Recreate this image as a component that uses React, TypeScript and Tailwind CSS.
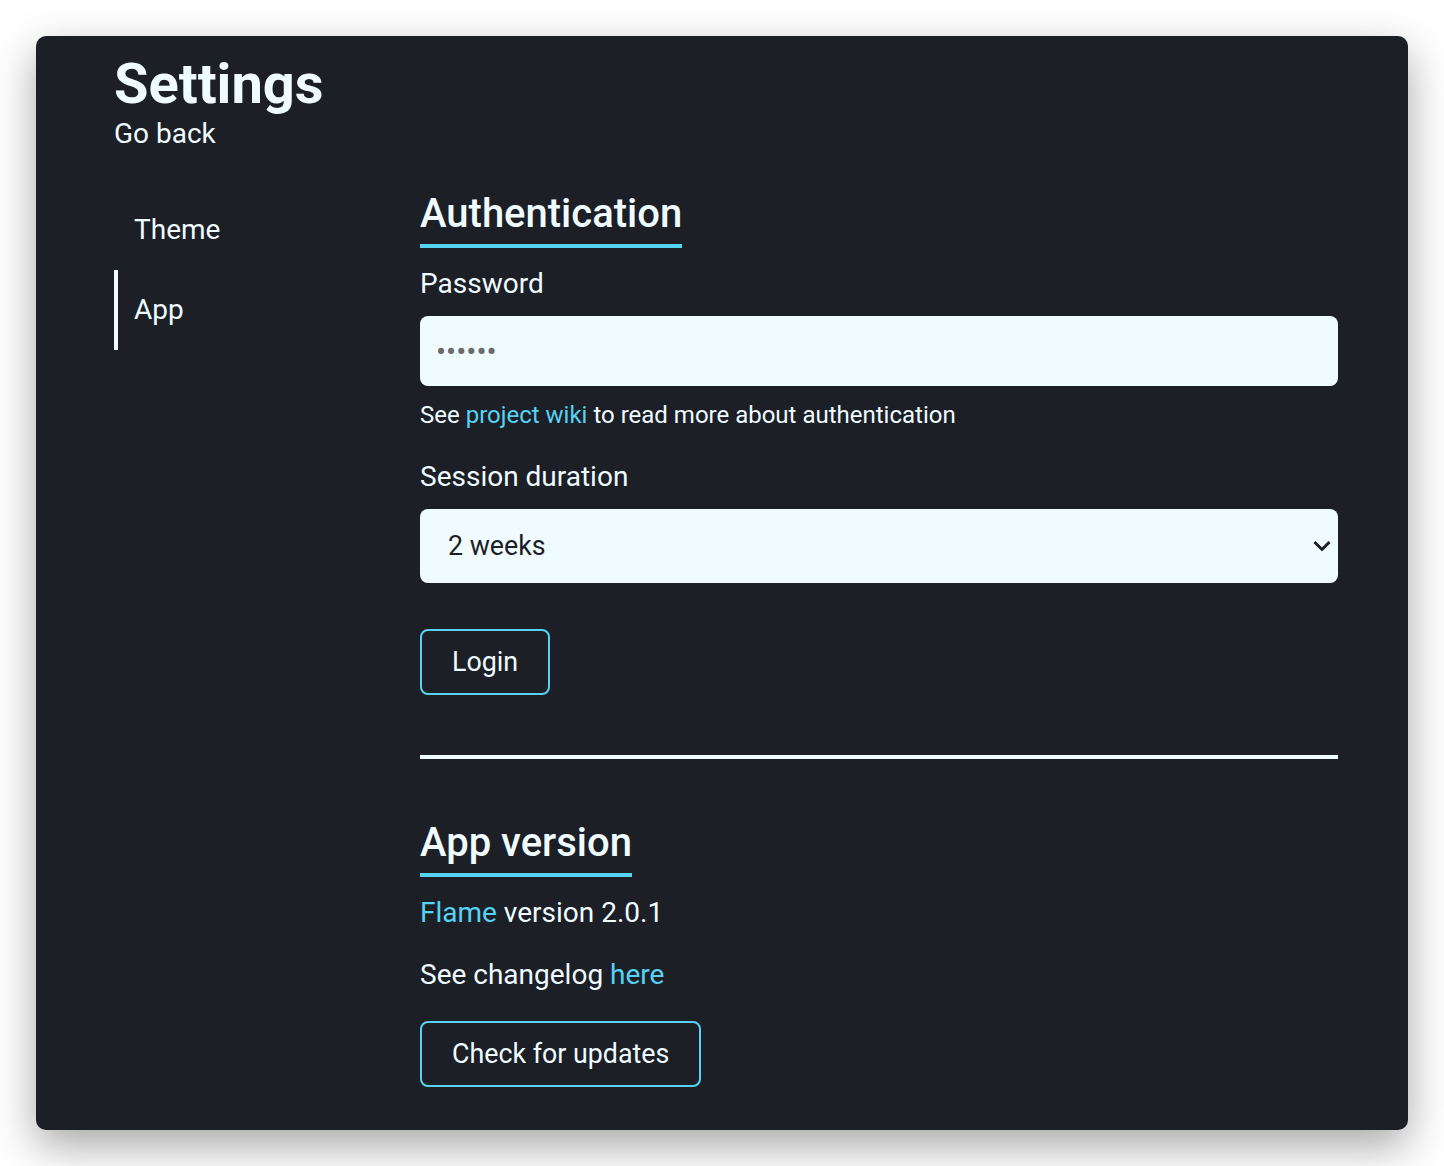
import React from 'react';

const accent = 'text-[#56d3f2]';

export default function App() {
  return (
    <div className="min-h-screen bg-white p-[36px] font-['Roboto','Liberation_Sans',sans-serif]">
      <div className="h-[1094px] w-[1372px] rounded-[10px] bg-[#1c1f26] pl-[78px] pt-[20px] text-[#effbff] shadow-[0_16px_44px_rgba(0,0,0,0.35)]">
        <header>
          <h1 className="text-[56px] font-bold leading-[56px]">Settings</h1>
          <a className="mt-[8px] block w-fit cursor-pointer text-[28px] leading-[28px]">Go back</a>
        </header>

        <div className="mt-[42px] grid grid-cols-[306px_918px]">
          <nav className="flex flex-col">
            <a className="flex h-[80px] cursor-pointer items-center border-l-4 border-transparent pl-4 text-[28px] leading-[28px]">
              Theme
            </a>
            <a className="flex h-[80px] cursor-pointer items-center border-l-4 border-[#effbff] pl-4 text-[28px] leading-[28px]">
              App
            </a>
          </nav>

          <main>
            <h2 className="w-fit border-b-4 border-[#56d3f2] pb-[6px] text-[40px] font-medium leading-[48px]">
              Authentication
            </h2>
            <label className="mt-[22px] block text-[28px] leading-[28px]">Password</label>
            <input
              type="password"
              placeholder="••••••"
              className="mt-[18px] block h-[70px] w-full rounded-[8px] bg-[#effbff] px-[16px] text-[30px] text-[#1c1f26] outline-none placeholder:text-[#6b6b6b]"
            />
            <p className="mt-[17px] text-[24px] leading-[24px]">
              See <a className={`${accent} cursor-pointer`}>project wiki</a> to read more about authentication
            </p>

            <label className="mt-[36px] block text-[28px] leading-[28px]">Session duration</label>
            <div className="relative mt-[18px]">
              <select
                defaultValue="14"
                className="block h-[74px] w-full appearance-none rounded-[8px] bg-[#effbff] pl-[28px] text-[26.8px] text-[#1c1f26] outline-none"
              >
                <option value="1">1 day</option>
                <option value="7">1 week</option>
                <option value="14">2 weeks</option>
                <option value="30">1 month</option>
              </select>
              <svg
                viewBox="0 0 18 11"
                className="pointer-events-none absolute right-[7px] top-1/2 h-[11px] w-[18px] -translate-y-1/2"
                fill="none"
                stroke="#1c1f26"
                strokeWidth="3"
              >
                <path d="M1.5 1.5l7.5 7.5 7.5-7.5" />
              </svg>
            </div>

            <button className="mt-[46px] block h-[66px] rounded-[8px] border-2 border-[#56d3f2] px-[30px] text-[26.8px] leading-[28px]">
              Login
            </button>

            <div className="mt-[60px] h-[4px] bg-[#effbff]"></div>

            <h2 className="mt-[60px] w-fit border-b-4 border-[#56d3f2] pb-[6px] text-[40px] font-medium leading-[48px]">
              App version
            </h2>
            <p className="mt-[22px] text-[28px] leading-[28px]">
              <a className={`${accent} cursor-pointer`}>Flame</a> version 2.0.1
            </p>
            <p className="mt-[34px] text-[28px] leading-[28px]">
              See changelog <a className={`${accent} cursor-pointer`}>here</a>
            </p>
            <button className="mt-[32px] block h-[66px] rounded-[8px] border-2 border-[#56d3f2] px-[30px] text-[26.8px] leading-[28px]">
              Check for updates
            </button>
          </main>
        </div>
      </div>
    </div>
  );
}
